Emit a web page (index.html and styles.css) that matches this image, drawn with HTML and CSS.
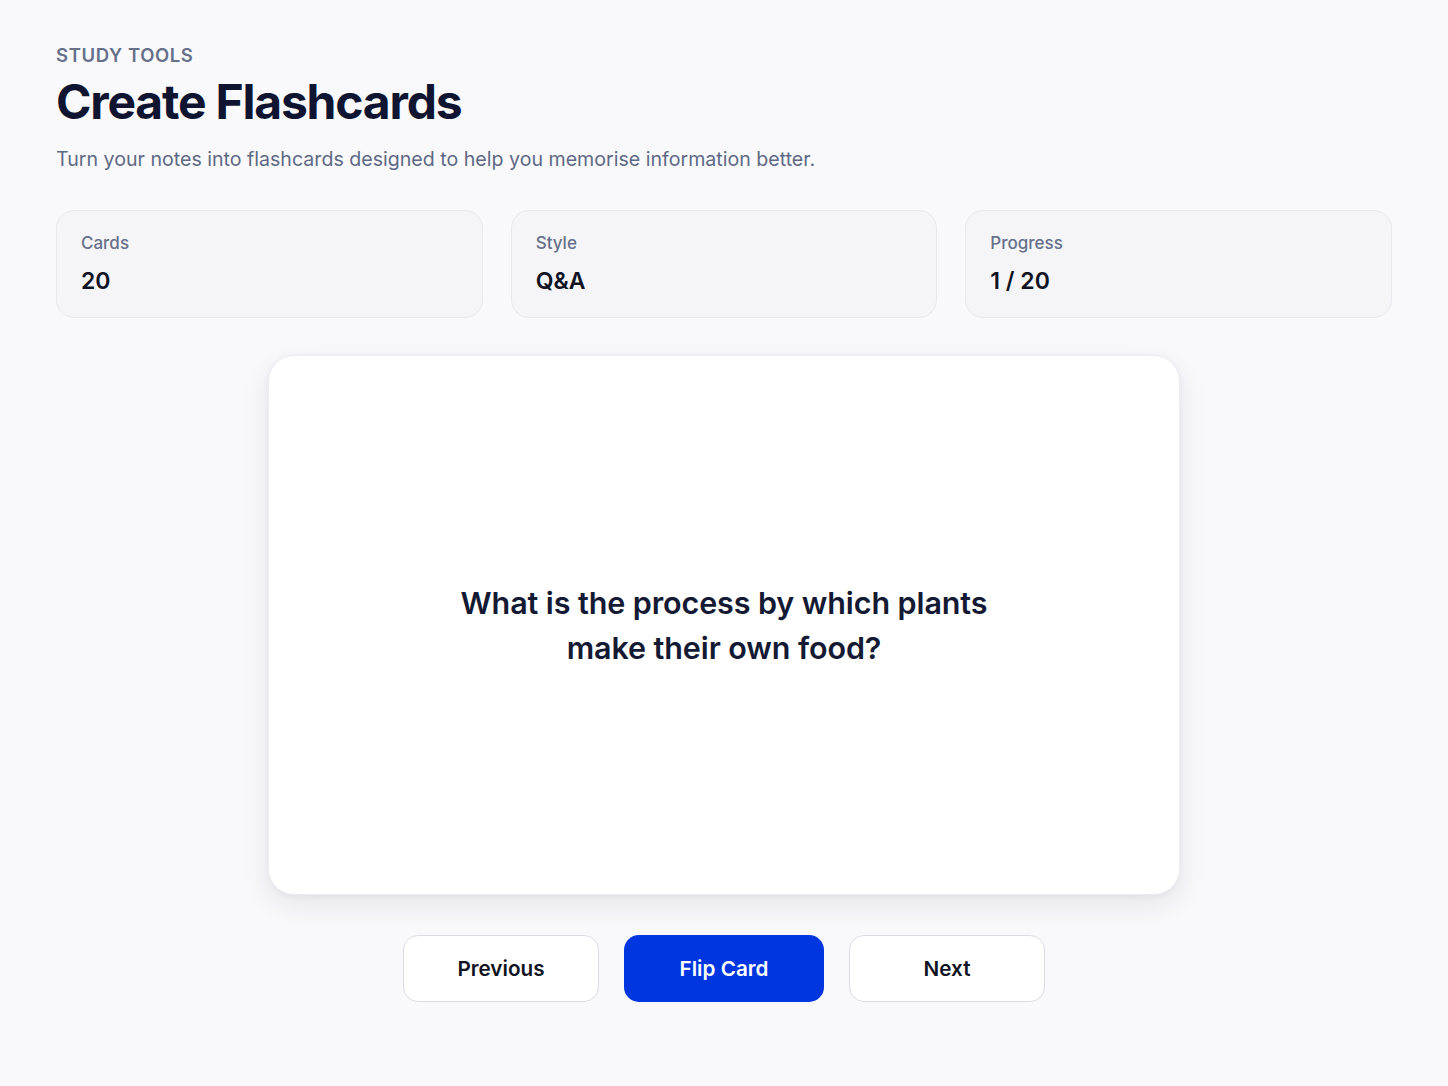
FILE: index.html
```html
<!DOCTYPE html>
<html lang="en">
<head>
<meta charset="utf-8">
<title>Create Flashcards</title>
<link rel="stylesheet" href="styles.css">
</head>
<body>
<main class="page">
  <header class="header">
    <p class="eyebrow">STUDY TOOLS</p>
    <h1 class="title">Create Flashcards</h1>
    <p class="subtitle">Turn your notes into flashcards designed to help you memorise information better.</p>
  </header>
  <section class="stats">
    <div class="stat">
      <div class="stat-label">Cards</div>
      <div class="stat-value">20</div>
    </div>
    <div class="stat">
      <div class="stat-label">Style</div>
      <div class="stat-value">Q&amp;A</div>
    </div>
    <div class="stat">
      <div class="stat-label">Progress</div>
      <div class="stat-value">1 / 20</div>
    </div>
  </section>
  <section class="card-wrap">
    <div class="flashcard">
      <p class="question">What is the process by which plants make their own food?</p>
    </div>
  </section>
  <nav class="controls">
    <button class="btn btn-outline">Previous</button>
    <button class="btn btn-primary">Flip Card</button>
    <button class="btn btn-outline">Next</button>
  </nav>
</main>
</body>
</html>
```
FILE: styles.css
```css
* { box-sizing: border-box; }
html, body { margin: 0; padding: 0; }
body {
  background: #f9f9fc;
  font-family: Inter, "Noto Sans", "Liberation Sans", sans-serif;
  color: #131a33;
  width: 1448px;
  height: 1086px;
  overflow: hidden;
}
.page {
  padding: 44px 56px 0 56px;
}
.header p, .header h1 { margin: 0; }
.eyebrow {
  font-size: 18.5px;
  line-height: 22px;
  font-weight: 600;
  letter-spacing: 0.6px;
  color: #667089;
}
.title {
  margin-top: 7px !important;
  font-size: 48px;
  line-height: 58px;
  font-weight: 700;
  letter-spacing: -1.2px;
  color: #0f1530;
}
.subtitle {
  margin-top: 15px !important;
  font-size: 19.6px;
  line-height: 27px;
  color: #5e6985;
}
.stats {
  margin-top: 37px;
  display: grid;
  grid-template-columns: repeat(3, 1fr);
  gap: 28px;
}
.stat {
  height: 108px;
  background: #f5f5f8;
  border: 1px solid #e7e7ee;
  border-radius: 18px;
  padding: 22px 24px;
}
.stat-label {
  font-size: 17px;
  line-height: 20px;
  font-weight: 500;
  color: #667089;
}
.stat-value {
  margin-top: 14px;
  font-size: 23px;
  line-height: 28px;
  font-weight: 600;
  color: #0f1322;
}
.card-wrap {
  margin-top: 37px;
  display: flex;
  justify-content: center;
}
.flashcard {
  width: 912px;
  height: 540px;
  background: #ffffff;
  border: 1px solid #ececf1;
  border-radius: 26px;
  box-shadow: 0 10px 28px rgba(20, 24, 50, 0.09), 0 2px 6px rgba(20, 24, 50, 0.04);
  display: flex;
  align-items: center;
  justify-content: center;
}
.question {
  margin: 0;
  max-width: 580px;
  text-align: center;
  font-size: 30.5px;
  line-height: 45px;
  font-weight: 600;
  color: #141a33;
  letter-spacing: -0.1px;
}
.controls {
  margin-top: 40px;
  display: flex;
  justify-content: center;
  gap: 25px;
}
.btn {
  height: 67px;
  border-radius: 15px;
  font-family: inherit;
  font-size: 20.7px;
  font-weight: 600;
  cursor: pointer;
}
.btn-outline {
  width: 196px;
  background: #ffffff;
  border: 1.5px solid #dcdce4;
  color: #0f1322;
}
.btn-primary {
  width: 200px;
  background: #0036e0;
  border: none;
  color: #ffffff;
}
```
